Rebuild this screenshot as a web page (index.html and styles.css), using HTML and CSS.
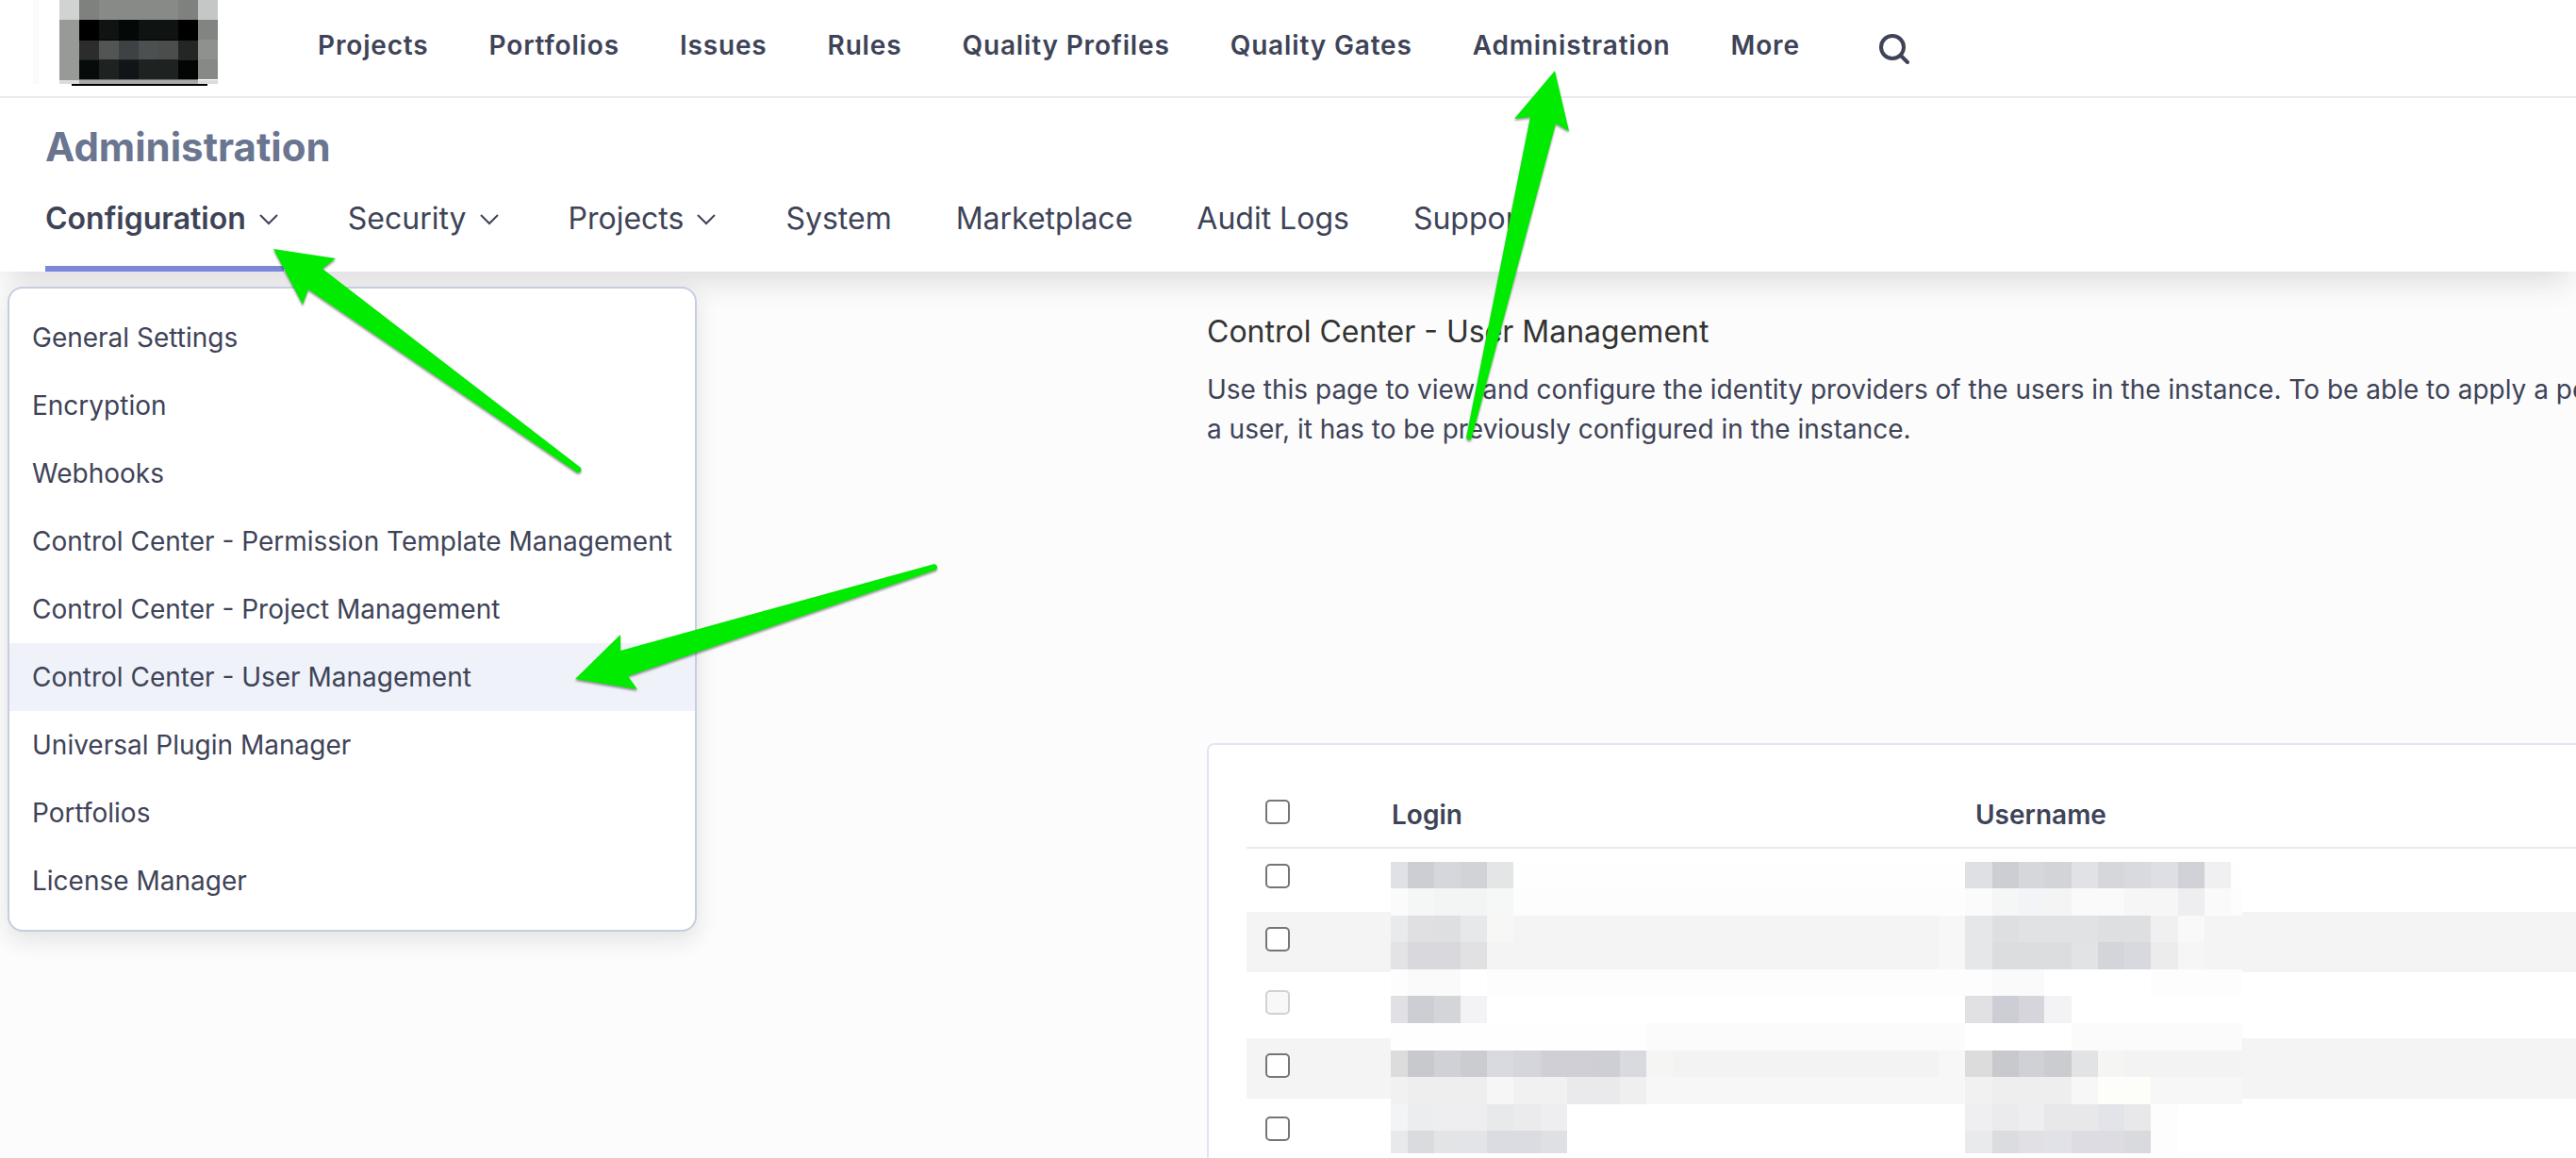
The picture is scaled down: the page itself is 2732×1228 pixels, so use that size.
FILE: index.html
```html
<!DOCTYPE html>
<html lang="en">
<head>
<meta charset="utf-8">
<meta name="viewport" content="width=device-width, initial-scale=1">
<title>Control Center - User Management</title>
<link rel="stylesheet" href="styles.css">
</head>
<body>
<header class="topbar">
  <a class="logo" href="#" aria-label="Home">
    <svg width="196" height="92" viewBox="0 0 196 92" shape-rendering="crispEdges" aria-hidden="true">
      <path fill="#fbfbfb" d="M0 0h7v89H0z"/>
      <g transform="translate(28 0)">
        <path fill="#d1d3d2" d="M0 0h21v21H0z"/><path fill="#7f817f" d="M21 0h21v21H21z"/><path fill="#888a88" d="M42 0h84v21H42z"/><path fill="#7f817f" d="M126 0h21v21h-21z"/><path fill="#c5c7c6" d="M147 0h21v21h-21z"/>
        <path fill="#989a98" d="M0 21h21v64H0z"/><path fill="#000" d="M21 21h126v22H21z"/><path fill="#0f1312" d="M42 21h21v21H42zM84 21h42v21H84z"/><path fill="#040908" d="M63 21h21v21H63z"/><path fill="#828482" d="M147 21h21v21h-21z"/>
        <path fill="#2b2c2b" d="M21 43h21v20H21z"/><path fill="#525554" d="M42 43h21v20H42z"/><path fill="#3e4244" d="M63 43h21v20H63z"/><path fill="#4c5051" d="M84 43h21v20H84z"/><path fill="#4a4d4b" d="M105 43h21v20h-21z"/><path fill="#232625" d="M126 43h21v20h-21z"/><path fill="#8f918f" d="M147 42h21v21h-21z"/>
        <path fill="#070b0a" d="M21 64h21v20H21z"/><path fill="#1e2221" d="M21 63h126v1H21zM42 64h84v20H42z"/><path fill="#101618" d="M63 64h21v20H63z"/><path fill="#020504" d="M126 64h21v20h-21z"/><path fill="#878987" d="M147 63h21v21h-21z"/>
        <path fill="#6f7170" d="M21 84h126v1H21z"/><path fill="#dcdcdc" d="M0 85h168v4H0z"/><path fill="#a8a9a8" d="M21 85h126v4H21z"/>
        <path fill="#000" d="M13 89h144v2H13z"/>
      </g>
    </svg>
  </a>
  <nav class="mainnav" aria-label="Main">
    <a href="#">Projects</a>
    <a href="#">Portfolios</a>
    <a href="#">Issues</a>
    <a href="#">Rules</a>
    <a href="#">Quality Profiles</a>
    <a href="#">Quality Gates</a>
    <a href="#">Administration</a>
    <a href="#">More</a>
  </nav>
  <button class="search" type="button" aria-label="Search">
    <svg width="32" height="32" viewBox="0 0 32 32" fill="none" stroke="currentColor" stroke-width="4" stroke-linecap="round" aria-hidden="true"><circle cx="14" cy="14" r="12"/><path d="M23 23l7 7"/></svg>
  </button>
</header>

<section class="subbar">
  <h1>Administration</h1>
  <nav class="tabs" aria-label="Administration">
    <button class="tab active" type="button" aria-expanded="true">Configuration <svg class="chev" viewBox="0 0 32 32" aria-hidden="true"><path d="M7 12l9 9 9-9"/></svg></button>
    <button class="tab" type="button">Security <svg class="chev" viewBox="0 0 32 32" aria-hidden="true"><path d="M7 12l9 9 9-9"/></svg></button>
    <button class="tab" type="button">Projects <svg class="chev" viewBox="0 0 32 32" aria-hidden="true"><path d="M7 12l9 9 9-9"/></svg></button>
    <a class="tab" href="#">System</a>
    <a class="tab" href="#">Marketplace</a>
    <a class="tab" href="#">Audit Logs</a>
    <a class="tab" href="#">Support</a>
  </nav>
  <ul class="menu">
    <li><a href="#">General Settings</a></li>
    <li><a href="#">Encryption</a></li>
    <li><a href="#">Webhooks</a></li>
    <li><a href="#">Control Center - Permission Template Management</a></li>
    <li><a href="#">Control Center - Project Management</a></li>
    <li><a class="current" href="#">Control Center - User Management</a></li>
    <li><a href="#">Universal Plugin Manager</a></li>
    <li><a href="#">Portfolios</a></li>
    <li><a href="#">License Manager</a></li>
  </ul>
</section>

<main class="content">
  <div class="intro">
    <h2>Control Center - User Management</h2>
    <p>Use this page to view and configure the identity providers of the users in the instance. To be able to apply a permission template to<br>a user, it has to be previously configured in the instance.</p>
  </div>
  <div class="panel">
    <table>
      <thead>
        <tr><th class="pick"><input type="checkbox" aria-label="Select all users"></th><th class="login">Login</th><th>Username</th></tr>
      </thead>
      <tbody>
        <tr><td><input type="checkbox" aria-label="Select user 1"></td><td></td><td></td></tr>
        <tr><td><input type="checkbox" aria-label="Select user 2"></td><td></td><td></td></tr>
        <tr><td><input type="checkbox" aria-label="Select user 3" disabled></td><td></td><td></td></tr>
        <tr><td><input type="checkbox" aria-label="Select user 4"></td><td></td><td></td></tr>
        <tr><td><input type="checkbox" aria-label="Select user 5"></td><td></td><td></td></tr>
      </tbody>
    </table>
    <svg class="redaction" width="904" height="309" viewBox="0 0 904 309" shape-rendering="crispEdges" aria-hidden="true">
      <path fill="#fefefe" d="M0 0h903v28H0z"/><path fill="#fdfdfd" d="M0 28h903v29H0zM0 114h903v28H0z"/><path fill="#f4f4f4" d="M0 57h903v57H0z"/><path fill="#fff" d="M0 142h903v29H0zM0 257h903v52H0z"/><path fill="#fbfbfb" d="M0 171h903v29H0z"/><path fill="#f3f3f3" d="M0 200h903v28H0z"/><path fill="#f7f7f7" d="M0 228h903v29H0z"/>
      <!-- login, rows top to bottom -->
      <path fill="#e0e1e6" d="M0 0h18v28H0z"/><path fill="#cdced4" d="M18 0h28v28H18z"/><path fill="#d6d7dc" d="M46 0h28v28H46z"/><path fill="#d2d3d7" d="M74 0h28v28H74z"/><path fill="#e4e5e7" d="M102 0h28v28h-28z"/>
      <path fill="#fafbfa" d="M0 28h18v29H0z"/><path fill="#f4f7f6" d="M18 28h28v29H18z"/><path fill="#f3f4f4" d="M46 28h56v29H46z"/><path fill="#f6f7f7" d="M102 28h28v29h-28z"/>
      <path fill="#e8eaec" d="M0 57h18v28H0z"/><path fill="#e0e0e2" d="M18 57h28v28H18z"/><path fill="#dddfe0" d="M46 57h28v28H46z"/><path fill="#e6e8ea" d="M74 57h28v28H74z"/><path fill="#f7f7f5" d="M102 57h28v28h-28z"/>
      <path fill="#e3e3e5" d="M0 85h18v29H0z"/><path fill="#d8d8dd" d="M18 85h56v29H18z"/><path fill="#e1e1e3" d="M74 85h28v29H74z"/>
      <path fill="#fafafa" d="M18 114h56v28H18z"/><path fill="#fff" d="M74 114h28v28H74z"/>
      <path fill="#e0e0e5" d="M0 142h18v29H0z"/><path fill="#ccced4" d="M18 142h28v29H18z"/><path fill="#d4d5d9" d="M46 142h28v29H46z"/><path fill="#f3f3f6" d="M74 142h28v29H74z"/>
      <path fill="#fefefe" d="M0 171h271v29H0z"/>
      <path fill="#dcdcdd" d="M0 200h18v28H0z"/><path fill="#c8c9cd" d="M18 200h28v28H18z"/><path fill="#d0d1d6" d="M46 200h28v28H46z"/><path fill="#cbccd0" d="M74 200h28v28H74z"/><path fill="#d9dae0" d="M102 200h28v28h-28z"/><path fill="#d5d6db" d="M130 200h29v28h-29z"/><path fill="#d0cfd5" d="M159 200h56v28h-56z"/><path fill="#cecfd5" d="M215 200h28v28h-28z"/><path fill="#d9dae0" d="M243 200h28v28h-28z"/><path fill="#f5f5f3" d="M271 200h29v28h-29z"/>
      <path fill="#f1f1f1" d="M0 228h18v29H0z"/><path fill="#eee" d="M18 228h84v29H18z"/><path fill="#f6f6f6" d="M102 228h28v29h-28z"/><path fill="#f1f1f2" d="M130 228h57v29h-57z"/><path fill="#eaeaed" d="M187 228h56v29h-56z"/><path fill="#efefef" d="M243 228h28v29h-28z"/>
      <path fill="#f2f4f6" d="M0 257h18v28H0z"/><path fill="#ebedef" d="M18 257h28v28H18z"/><path fill="#eeeef0" d="M46 257h56v28H46z"/><path fill="#e7e9ea" d="M102 257h28v28h-28z"/><path fill="#ebebed" d="M130 257h29v28h-29z"/><path fill="#eeeef0" d="M159 257h28v28h-28z"/>
      <path fill="#e8e9eb" d="M0 285h18v24H0z"/><path fill="#dadbdf" d="M18 285h28v24H18z"/><path fill="#e3e4e6" d="M46 285h28v24H46z"/><path fill="#e3e4e8" d="M74 285h28v24H74z"/><path fill="#dbdce1" d="M102 285h57v24h-57z"/><path fill="#dfe0e4" d="M159 285h28v24h-28z"/>
      <!-- username, rows top to bottom -->
      <path fill="#dee0e4" d="M609 0h29v28h-29z"/><path fill="#cdced3" d="M638 0h28v28h-28z"/><path fill="#d6d7db" d="M666 0h27v28h-27z"/><path fill="#d3d4d8" d="M693 0h29v28h-29z"/><path fill="#e1e2e6" d="M722 0h28v28h-28z"/><path fill="#d6d7db" d="M750 0h28v28h-28z"/><path fill="#d9dae0" d="M778 0h28v28h-28z"/><path fill="#dedfe4" d="M806 0h29v28h-29z"/><path fill="#d1d2d8" d="M835 0h28v28h-28z"/><path fill="#f0f0f3" d="M863 0h28v28h-28z"/>
      <path fill="#fafbfa" d="M609 28h29v29h-29z"/><path fill="#f4f7f6" d="M638 28h28v29h-28z"/><path fill="#f2f4f7" d="M666 28h27v29h-27z"/><path fill="#f4f4f4" d="M693 28h29v29h-29z"/><path fill="#fafafa" d="M722 28h56v29h-56zM863 28h28v29h-28z"/><path fill="#f6f6f6" d="M778 28h57v29h-57z"/><path fill="#eeeef1" d="M835 28h28v29h-28z"/>
      <path fill="#f7f7f7" d="M581 57h28v57h-28z"/><path fill="#e5e7e8" d="M609 57h29v57h-29z"/><path fill="#dddfe0" d="M638 57h28v28h-28z"/><path fill="#e1e2e4" d="M666 57h84v28h-84z"/><path fill="#dddfe0" d="M750 57h56v28h-56z"/><path fill="#f0f0f0" d="M806 57h29v28h-29z"/><path fill="#f9f9f9" d="M835 57h28v28h-28z"/>
      <path fill="#dcdddf" d="M638 85h84v29h-84z"/><path fill="#e2e3e4" d="M722 85h28v29h-28z"/><path fill="#d4d5da" d="M750 85h28v29h-28z"/><path fill="#d8d9de" d="M778 85h28v29h-28z"/><path fill="#ececec" d="M806 85h29v29h-29z"/><path fill="#f6f6f6" d="M835 85h28v29h-28z"/>
      <path fill="#fafafa" d="M638 114h55v28h-55z"/><path fill="#fff" d="M693 114h113v28H693z"/>
      <path fill="#e1e1e3" d="M609 142h29v29h-29z"/><path fill="#cdced5" d="M638 142h28v29h-28z"/><path fill="#d6d5db" d="M666 142h27v29h-27z"/><path fill="#f3f3f6" d="M693 142h29v29h-29z"/>
      <path fill="#fff" d="M609 171h113v29H609z"/>
      <path fill="#f7f7f7" d="M581 200h28v28h-28z"/><path fill="#dcdcdd" d="M609 200h29v28h-29z"/><path fill="#c8c9cd" d="M638 200h28v28h-28z"/><path fill="#d0d1d6" d="M666 200h27v28h-27z"/><path fill="#cbccd0" d="M693 200h29v28h-29z"/><path fill="#e2e3e5" d="M722 200h28v28h-28z"/><path fill="#f5f5f3" d="M750 200h28v28h-28z"/>
      <path fill="#f1f1f1" d="M609 228h29v29h-29z"/><path fill="#eee" d="M638 228h84v29h-84z"/><path fill="#f7f7f7" d="M722 228h28v29h-28z"/><path fill="#fdfdfa" d="M750 228h56v29h-56z"/>
      <path fill="#efeff1" d="M609 257h29v28h-29z"/><path fill="#ebebed" d="M638 257h28v28h-28z"/><path fill="#eeeef0" d="M666 257h27v28h-27z"/><path fill="#e8e8ea" d="M693 257h57v28h-57z"/><path fill="#e3e4e9" d="M750 257h28v28h-28z"/><path fill="#e8e8ea" d="M778 257h28v28h-28z"/><path fill="#fdfdfd" d="M806 257h29v52h-29z"/>
      <path fill="#e9eaec" d="M609 285h29v24h-29z"/><path fill="#dbdce0" d="M638 285h28v24h-28z"/><path fill="#e1e0e5" d="M666 285h27v24h-27z"/><path fill="#e1e2e7" d="M693 285h29v24h-29z"/><path fill="#dddce2" d="M722 285h56v24h-56z"/><path fill="#d9dade" d="M778 285h28v24h-28z"/>
    </svg>
  </div>
</main>

<svg class="annotations" width="1700" height="760" viewBox="0 0 1700 760" aria-hidden="true">
  <path d="M1649 75L1606 126L1623 124L1555 464Q1558 469 1561 464L1650 131L1664 139Z"/>
  <path d="M290 264L356 274L342 285L616 496Q618 501 612 501L327 307L321 323Z"/>
  <path d="M610 720L658 673V690L991 598Q996 600 993 604L666 717L676 731Z"/>
</svg>
</body>
</html>
```
FILE: styles.css
```css
* { box-sizing: border-box; }

body {
  margin: 0;
  position: relative;
  overflow-x: hidden;
  background: #fcfcfc;
  color: #3e4357;
  font-family: Inter, "Noto Sans", sans-serif;
  font-size: 28px;
  line-height: 42px;
}

a { color: inherit; text-decoration: none; }
button { font: inherit; color: inherit; background: none; border: 0; padding: 0; }

.topbar {
  position: relative;
  z-index: 1;
  display: flex;
  align-items: flex-start;
  height: 104px;
  padding-left: 35px;
  background: #fff;
  border-bottom: 2px solid #eaeaea;
}

.logo svg { display: block; }

.mainnav {
  display: flex;
  gap: 64px;
  margin-left: 106px;
  padding-top: 27px;
  font-weight: 600;
  letter-spacing: 0.03em;
}

.search { margin-left: 84px; padding-top: 36px; }
.search svg { display: block; }

.subbar {
  position: relative;
  height: 184px;
  padding: 28px 48px 0;
  background: #fff;
  box-shadow: 0 16px 32px -8px rgba(29, 33, 47, .16);
}

.subbar h1 {
  margin: 0;
  color: #6a7590;
  font-size: 42px;
  font-weight: 700;
  line-height: 48px;
}

.tabs {
  display: flex;
  gap: 68px;
  height: 108px;
  font-size: 32px;
  line-height: 48px;
}

.tab {
  display: flex;
  gap: 8px;
  align-items: center;
  padding-bottom: 4px;
  white-space: nowrap;
}

.tab.active { font-weight: 600; box-shadow: inset 0 -6px #7b87d9; }

.chev {
  width: 32px;
  height: 32px;
  fill: none;
  stroke: currentColor;
  stroke-width: 2;
}

.menu {
  position: absolute;
  z-index: 1;
  top: 200px;
  left: 8px;
  margin: 0;
  padding: 16px 0;
  list-style: none;
  background: #fff;
  border: 2px solid #c5cddf;
  border-radius: 16px;
  box-shadow: 0 8px 24px rgba(29, 33, 47, .12);
}

.menu a { display: block; padding: 15px 24px; white-space: nowrap; }
.menu .current { background: #eff2f9; }

.content { padding: 40px 0 0 1280px; overflow: hidden; }

.intro { white-space: nowrap; }

.intro h2 {
  margin: 0 0 16px;
  color: #333;
  font-size: 32px;
  font-weight: 400;
  line-height: 48px;
}

.intro p { margin: 0 0 312px; }

.panel {
  position: relative;
  min-height: 440px;
  padding: 40px 0 0 40px;
  margin-right: -20px;
  background: #fff;
  border: 2px solid #e1e5f2;
  border-radius: 8px;
}

table { width: 100%; table-layout: fixed; border-spacing: 0; }
th { height: 70px; padding: 0; border-bottom: 2px solid #eaeaea; font-weight: 600; text-align: left; }
th.pick { width: 154px; padding-bottom: 6px; }
.login { width: 619px; }
td { height: 67px; padding: 0; border-bottom: 3px solid transparent; background-clip: padding-box; vertical-align: top; }
td:first-child { padding-top: 16px; }
tbody tr:nth-child(even) td { background-color: #f4f4f4; }

input[type="checkbox"] {
  display: block;
  width: 26px;
  height: 26px;
  margin: 0 0 0 20px;
  appearance: none;
  background: #fff;
  border: 2px solid #767676;
  border-radius: 5px;
}

input[type="checkbox"]:disabled { background: #f8f8f8; border-color: #d1d1d1; }

.redaction { position: absolute; top: 124px; left: 193px; }

.annotations {
  position: absolute;
  z-index: 2;
  top: 0;
  left: 0;
  fill: #00eb00;
  filter: drop-shadow(0 2px 1px rgba(0, 0, 0, .4));
  pointer-events: none;
}
```
